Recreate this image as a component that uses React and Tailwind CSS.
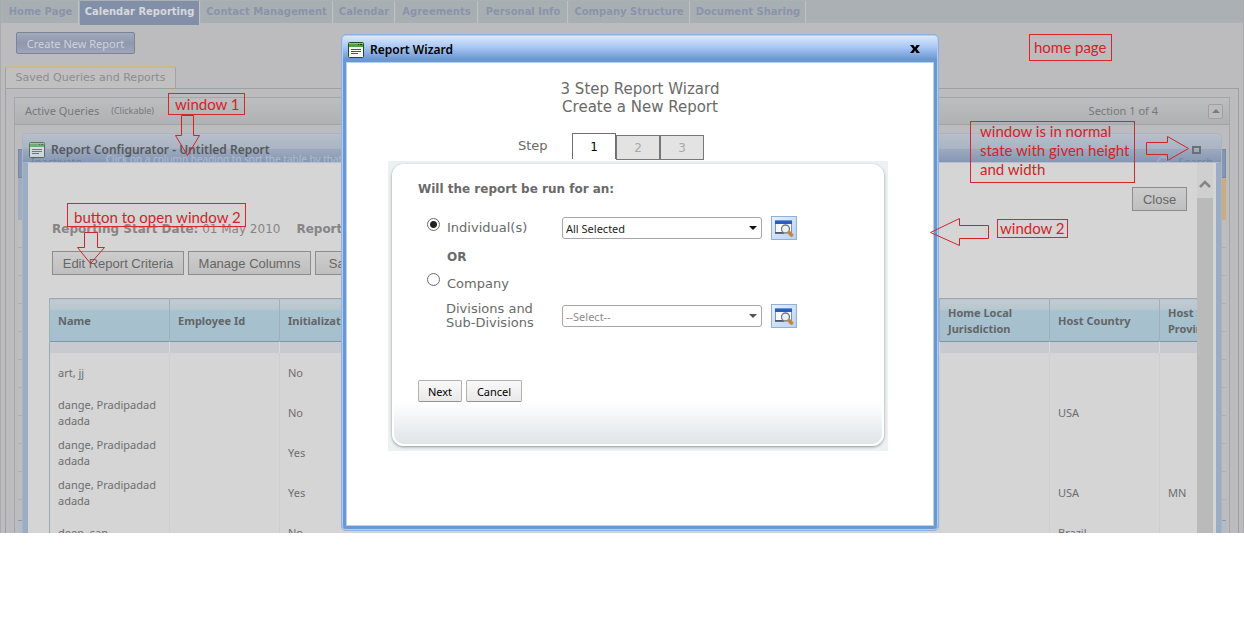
import React, { useState } from "react";

const navTabs = [
  { label: "Home Page", width: "w-[76px]" },
  { label: "Calendar Reporting", width: "w-[120px]", active: true },
  { label: "Contact Management", width: "w-[132px]" },
  { label: "Calendar", width: "w-[61px]" },
  { label: "Agreements", width: "w-[82px]" },
  { label: "Personal Info", width: "w-[89px]" },
  { label: "Company Structure", width: "w-[121px]" },
  { label: "Document Sharing", width: "w-[115px]" },
];

const columns = [
  "Name",
  "Employee Id",
  "Initialization",
  "Start Date",
  "End Date",
  "Home Country",
  "Home State",
  "Home City",
  "Home Local Jurisdiction",
  "Host Country",
  "Host State or Province",
];

const rows = [
  { name: "art, jj", init: "No", host: "", state: "" },
  { name: "dange, Pradipadad adada", init: "No", host: "USA", state: "" },
  { name: "dange, Pradipadad adada", init: "Yes", host: "", state: "" },
  { name: "dange, Pradipadad adada", init: "Yes", host: "USA", state: "MN" },
  { name: "deep, san", init: "No", host: "Brazil", state: "" },
];

const verdana = "font-['DejaVu_Sans',sans-serif]";
const segoe = "font-['Noto_Sans',sans-serif]";

function FormIcon({ className }) {
  return (
    <svg className={className} width="16" height="16" viewBox="0 0 16 16" aria-hidden="true">
      <rect x="0.5" y="0.5" width="15" height="15" rx="1" fill="#f6f9f2" stroke="#24471f" />
      <rect x="1" y="1" width="14" height="4" fill="#4da33c" />
      <rect x="1" y="1" width="14" height="1" fill="#8fce7f" />
      <rect x="10" y="2" width="1" height="1" fill="#17330f" />
      <rect x="12" y="2" width="2" height="1" fill="#17330f" />
      <path d="M3 7.500h10M3 9.500h10M3 11.500h7" stroke="#3b6350" strokeWidth="1" />
    </svg>
  );
}

function LookupIcon() {
  return (
    <svg width="20" height="18" viewBox="0 0 20 18" aria-hidden="true">
      <rect x="1.5" y="1.5" width="16" height="12" fill="#fdfdff" stroke="#7d95bd" />
      <rect x="1" y="1" width="17" height="4" fill="#2d5cc0" />
      <rect x="1" y="1" width="17" height="1" fill="#6d93dd" />
      <path d="M1 14h9" stroke="#39414f" strokeWidth="1.4" />
      <circle cx="11.500" cy="10" r="4" fill="#e9f2f7" stroke="#6c7884" strokeWidth="1.3" />
      <path d="M15 13.500l2.500 2.500" stroke="#c98433" strokeWidth="3.600" strokeLinecap="round" />
    </svg>
  );
}

function NavBar() {
  return (
    <nav className={`flex h-[23px] items-start gap-px bg-[#aab0b4] pl-[2px] pt-px text-[10px] font-bold ${verdana}`}>
      {navTabs.map((t) => (
        <a
          key={t.label}
          href="#"
          className={
            t.active
              ? `${t.width} flex h-6 shrink-0 items-center justify-center whitespace-nowrap border-r border-[#c0c2c4] bg-[#838fa8] pb-[3px] text-[#d6d9de]`
              : `${t.width} flex h-[22px] shrink-0 items-center justify-center whitespace-nowrap border-r border-[#bfc2c4] bg-[#a8afb3] pb-px text-[#8b93aa]`
          }
        >
          {t.label}
        </a>
      ))}
    </nav>
  );
}

function HomePage() {
  return (
    <div className="border-x border-[#aaa] bg-[#bcbcbe]">
      <NavBar />
      <div className="pl-[15px] pt-[9px]">
        <button className={`block h-[22px] w-[119px] rounded-[2px] border border-[#7c8498] bg-gradient-to-b from-[#a3aabb] via-[#8f98ae] to-[#9fa6ba] text-[11px] leading-none text-[#cfd3da] ${segoe}`}>
          Create New Report
        </button>
      </div>
      <div className="px-1 pt-3">
        <div className={`flex h-[22px] w-[171px] items-center justify-center rounded-t-[3px] border-x border-t-2 border-x-[#a3a3a3] border-t-[#cdb78d] bg-[#c0c0c1] text-[11px] text-[#8d8d8d] ${verdana}`}>
          Saved Queries and Reports
        </div>
        <section className="border border-[#a0a0a1] px-2 pt-2">
          <div className={`border border-[#a5a6a8] ${segoe}`}>
            <header className="flex h-[27px] items-center border-b border-[#a3a4a6] bg-gradient-to-b from-[#bdbec0] to-[#b0b1b3] pl-[10px] pr-[6px] text-[11px] text-[#77787a]">
              <span>Active Queries</span>
              <span className="pl-3 text-[9px]">(Clickable)</span>
              <span className="ml-auto pr-[50px]">Section 1 of 4</span>
              <button aria-label="Collapse section" className="flex size-[15px] items-center justify-center rounded-[2px] border border-[#a0a0a1] bg-[#bcbcbe]">
                <svg width="8" height="4" viewBox="0 0 8 4" aria-hidden="true">
                  <path d="M0 4L4 0l4 4z" fill="#7c7c7e" />
                </svg>
              </button>
            </header>
            <div className="px-[3px] pt-6">
              <div className="flex h-[29px] items-start border border-[#7787a4] bg-[#8595b3] pl-3 pr-3 text-[10px]">
                <span className="pt-1 text-[11px] text-[#465062]">Inactivate</span>
                <span className="pl-6 pt-[2px] text-[#e2e6ec]">Click on a column heading to sort the table by that column</span>
                <svg className="ml-auto mt-[5px]" width="14" height="14" viewBox="0 0 14 14" aria-hidden="true">
                  <circle cx="7" cy="7" r="5" fill="none" stroke="#b9c2cf" strokeWidth="2" />
                </svg>
                <span className="pl-2 pt-1 text-[11px] text-[#4c5563]">Search</span>
              </div>
              <div className="h-[42px] bg-gradient-to-r from-[#a2adbf] to-[#c9ad7c]" />
              {Array.from({ length: 10 }, (_, i) => (
                <div key={i} className="h-7 border-b border-[#b0b0b4] bg-[#bebebf]" />
              ))}
              <div className="mt-5 h-10 border-y border-[#8f98a8] bg-[#b3bbc6]" />
            </div>
          </div>
        </section>
      </div>
    </div>
  );
}

function ToolButton({ children, width }) {
  return (
    <button className={`${width} h-6 shrink-0 border border-[#8d8d8d] bg-gradient-to-b from-[#cdcdcd] to-[#bfbfbf] text-[13px] leading-none text-[#666] font-['Liberation_Sans',sans-serif]`}>
      {children}
    </button>
  );
}

function ReportTable() {
  return (
    <table className={`w-[1220px] table-fixed border-collapse text-left text-[11px] leading-4 text-[#6c6e70] ${segoe}`}>
      <colgroup>
        {columns.map((c, i) => (
          <col key={c} className={i === 0 ? "w-[120px]" : "w-[110px]"} />
        ))}
      </colgroup>
      <thead>
        <tr className="h-[43px] border-b border-t border-b-[#7998a8] border-t-[#9ba9b3]">
          {columns.map((c) => (
            <th key={c} className="border-l border-[#9fb0ba] bg-[linear-gradient(#c1cbd1_0,#b9c7ce_10px,#a7c1ce_11px,#a7bfcc_100%)] px-2 pt-[2px] text-[11px] font-bold text-[#626668]">
              {c}
            </th>
          ))}
        </tr>
        <tr className="h-[11px]">
          {columns.map((c) => (
            <td key={c} className="border-l border-[#d8d8da] bg-[#c9cad0] first:border-[#9ca8b2]" />
          ))}
        </tr>
      </thead>
      <tbody>
        {rows.map((r, i) => (
          <tr key={i} className="h-10">
            <td className="border-l border-[#9ca8b2] px-2">{r.name}</td>
            <td className="border-l border-[#ccced0]" />
            <td className="border-l border-[#ccced0] px-2">{r.init}</td>
            <td colSpan={5} />
            <td className="border-l border-[#ccced0]" />
            <td className="border-l border-[#ccced0] px-2">{r.host}</td>
            <td className="border-l border-[#ccced0] px-2">{r.state}</td>
          </tr>
        ))}
      </tbody>
    </table>
  );
}

function ConfiguratorWindow() {
  return (
    <section className="absolute inset-x-[22px] bottom-0 top-[133px] flex flex-col overflow-hidden rounded-t-[5px] border-x border-t border-[#a9b5c5]">
      <header className="flex h-7 shrink-0 items-center bg-gradient-to-b from-[#b6bfcb]/90 via-[#a6b2c4]/80 to-[#8799b5]/60 pl-[6px] pr-5 pt-1">
        <FormIcon className="opacity-60" />
        <h2 className={`pl-[6px] text-xs font-semibold text-[#58595c] ${segoe}`}>Report Configurator - Untitled Report</h2>
        <button aria-label="Restore window" className="ml-auto h-2 w-[9px] border-2 border-[#6c6f74]" />
      </header>
      <div className="flex grow overflow-hidden border-x-[5px] border-t border-[#9bacc3] border-t-[#b5c0cf] bg-[#d5d5d5] pr-[3px]">
        <div className="min-w-0 grow overflow-hidden pl-[21px] pt-6">
          <div className="flex justify-end pr-[10px]">
            <ToolButton width="w-[55px]">Close</ToolButton>
          </div>
          <p className={`whitespace-nowrap pl-[3px] pt-2 text-[12px] leading-5 text-[#858585] ${verdana}`}>
            <b>Reporting Start Date:</b> 01 May 2010
            <b className="pl-4">Reporting End Date:</b> 31 May 2010
          </p>
          <div className="flex gap-1 pl-[3px] pt-3">
            <ToolButton width="w-[132px]">Edit Report Criteria</ToolButton>
            <ToolButton width="w-[123px]">Manage Columns</ToolButton>
            <ToolButton width="w-[100px]">Save Report</ToolButton>
          </div>
          <div className="pt-[23px]">
            <ReportTable />
          </div>
        </div>
        <div className="w-4 shrink-0 bg-[#cfcfcf]">
          <svg className="mx-auto mt-4" width="12" height="10" viewBox="0 0 12 10" aria-hidden="true">
            <path d="M1 8l5-5 5 5" fill="none" stroke="#858585" strokeWidth="2.500" />
          </svg>
          <div className="mt-[9px] h-full bg-[#bababa]" />
        </div>
      </div>
    </section>
  );
}

function Picker({ id, label, disabled, children }) {
  return (
    <div className="relative">
      <select
        id={id}
        aria-label={label}
        className={`block h-[22px] w-full appearance-none rounded-[3px] border border-[#a5a5a5] bg-white pl-[3px] text-[11px] leading-none ${disabled ? "text-[#8d8d8d]" : "text-[#1e1e1e]"} ${segoe}`}
      >
        {children}
      </select>
      <svg className="pointer-events-none absolute right-[5px] top-[9px]" width="8" height="4" viewBox="0 0 8 4" aria-hidden="true">
        <path d="M0 0h8L4 4z" fill={disabled ? "#555" : "#111"} />
      </svg>
    </div>
  );
}

function LookupButton({ label }) {
  return (
    <button aria-label={label} className="flex h-6 w-[26px] items-center justify-center border border-[#8fb0dc] bg-gradient-to-br from-[#e6f0fc] to-[#b9d2f3]">
      <LookupIcon />
    </button>
  );
}

const radio =
  "size-[13px] appearance-none rounded-full border border-[#6b6b6b] bg-white checked:bg-[radial-gradient(circle,#222_0,#222_3px,#fff_4px)]";
const smallButton =
  "h-[22px] rounded-[2px] border border-[#b0b0b0] border-b-[#909090] bg-gradient-to-b from-[#f9f9f9] to-[#e9e9e9] text-[11px] leading-none text-black";

function WizardWindow() {
  const [target, setTarget] = useState("individual");
  return (
    <section
      role="dialog"
      aria-labelledby="wizard-title"
      className="absolute left-[341px] top-[34px] flex w-[598px] flex-col rounded-[5px] border border-[#8db1e6] bg-[#6c98d1] bg-[linear-gradient(#deebfc_0,#a5c4f2_13px,#6c98d1_24px)] bg-[length:100%_28px] bg-no-repeat px-1 pb-1 shadow-[inset_0_0_0_1px_#b3cdf3]"
    >
      <header className={`flex h-[27px] items-center px-[2px] pt-[3px] ${segoe}`}>
        <FormIcon />
        <h2 id="wizard-title" className="pl-[6px] text-xs font-semibold text-black">Report Wizard</h2>
        <button aria-label="Close wizard" className="ml-auto mr-[12px] size-[10px]">
          <svg width="10" height="10" viewBox="0 0 10 10" aria-hidden="true">
            <path d="M0 0h3.500L5 2.500 6.500 0H10L6.800 4 10 8H6.500L5 5.500 3.500 8H0l3.200-4z" fill="#000" />
          </svg>
        </button>
      </header>
      <div className={`border border-[#b5cff5] bg-white pb-[74px] pt-[17px] text-[#6a6a6a] ${verdana}`}>
        <h3 className="text-center text-[15px] leading-[18px]">
          3 Step Report Wizard
          <br />
          Create a New Report
        </h3>
        <div className="mt-[15px] flex h-[29px] items-end pl-[171px] text-xs">
          <span className="w-[54px] pb-[6px] text-[13px] leading-4">Step</span>
          <button className="mb-px h-[26px] w-11 border border-b-0 border-[#6f6f6f] bg-white text-black">1</button>
          <button className="h-[25px] w-11 border border-[#777] bg-[#e3e3e3] text-[#a9a9a9]">2</button>
          <button className="h-[25px] w-11 border border-[#777] bg-[#e3e3e3] text-[#a9a9a9]">3</button>
        </div>
        <div className="ml-[41px] mr-[45px] mt-px bg-[#eef1f2] px-1 pb-[5px] pt-[3px]">
          <form
            onSubmit={(e) => e.preventDefault()}
            className="rounded-xl border-2 border-white bg-[linear-gradient(#fff_0,#fff_85%,#dfe4e7_100%)] px-6 pb-[42px] pt-4 text-[13px] shadow-[0_1px_3px_#8a9496]"
          >
            <p className="text-[12px] font-bold leading-[14px]">Will the report be run for an:</p>
            <div className="grid grid-cols-[29px_115px_200px_35px] items-center pt-5">
              <input id="individual" type="radio" name="target" checked={target === "individual"} onChange={() => setTarget("individual")} className={`${radio} mb-2 ml-[9px]`} />
              <label htmlFor="individual">Individual(s)</label>
              <Picker id="people" label="Individuals">
                <option>All Selected</option>
              </Picker>
              <span className="pl-[9px]">
                <LookupButton label="Find individuals" />
              </span>
            </div>
            <p className="pl-[29px] pt-[9px] text-[12px] font-bold leading-4">OR</p>
            <div className="grid grid-cols-[29px_1fr] items-center pt-2">
              <input id="company" type="radio" name="target" checked={target === "company"} onChange={() => setTarget("company")} className={`${radio} mb-2 ml-[9px]`} />
              <label htmlFor="company" className="leading-5">Company</label>
            </div>
            <div className="grid grid-cols-[28px_116px_200px_35px] items-center pt-2">
              <span />
              <label htmlFor="divisions" className="leading-[14px]">
                Divisions and
                <br />
                Sub-Divisions
              </label>
              <Picker id="divisions" label="Divisions and Sub-Divisions" disabled>
                <option>--Select--</option>
              </Picker>
              <span className="pl-[9px]">
                <LookupButton label="Find divisions" />
              </span>
            </div>
            <div className={`flex gap-1 pt-[50px] ${segoe}`}>
              <button className={`${smallButton} w-11`}>Next</button>
              <button className={`${smallButton} w-14`}>Cancel</button>
            </div>
          </form>
        </div>
      </div>
    </section>
  );
}

function Note({ className, children }) {
  return (
    <div className={`absolute flex items-center whitespace-nowrap border border-[#d8262c] text-[15px] leading-[19px] text-[#d0242b] font-[Lato,sans-serif] ${className}`}>
      {children}
    </div>
  );
}

function Arrow({ className, width, height, d }) {
  return (
    <svg className={`pointer-events-none absolute ${className}`} width={width} height={height} viewBox={`0 0 ${width} ${height}`} aria-hidden="true">
      <path d={d} fill="none" stroke="#d0242b" strokeWidth="1" />
    </svg>
  );
}

export default function App() {
  return (
    <main className="min-h-screen bg-white">
      <div className="relative h-[533px] overflow-hidden">
        <HomePage />
        <ConfiguratorWindow />
        <WizardWindow />
        <Note className="left-[168px] top-[93px] h-[22px] w-[77px] pl-[6px] pt-px">window 1</Note>
        <Note className="left-[67px] top-[203px] h-6 w-[179px] pl-[6px] pt-[5px]">button to open window 2</Note>
        <Note className="right-[132px] top-[34px] h-[27px] w-[83px] pl-1">home page</Note>
        <Note className="right-[176px] top-[219px] h-[19px] w-[71px] pl-[2px]">window 2</Note>
        <Note className="right-[109px] top-[121px] h-[62px] w-[165px] pb-[3px] pl-[9px]">
          window is in normal
          <br />
          state with given height
          <br />
          and width
        </Note>
        <Arrow className="left-[175px] top-[115px]" width={26} height={42} d="M6.500 .5h12v20h6l-12 20-12-20h6z" />
        <Arrow className="left-[77px] top-[232px]" width={29} height={33} d="M7.500 .5h13v15h7l-14 16-13-16h7z" />
        <Arrow className="right-[54px] top-[136px]" width={44} height={26} d="M.5 6.500h21v-6l21 12-21 12v-6h-21z" />
        <Arrow className="right-[254px] top-[218px]" width={60} height={29} d="M.5 14.500l29-14v7h29v13h-29v7z" />
      </div>
    </main>
  );
}
